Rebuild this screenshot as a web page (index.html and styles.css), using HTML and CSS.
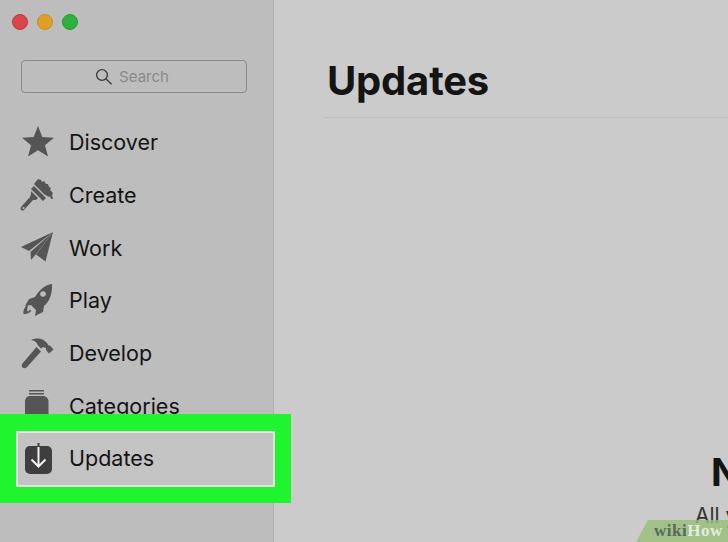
FILE: index.html
```html
<!DOCTYPE html>
<html lang="en">
<head>
  <meta charset="UTF-8" />
  <title>Updates</title>
  <link rel="stylesheet" href="styles.css">
</head>
<body>

  <div class="window">
    <aside class="sidebar">
      <div class="traffic">
        <span class="dot red"></span>
        <span class="dot yellow"></span>
        <span class="dot green"></span>
      </div>

      <div class="search">
        <svg class="search-icon" viewBox="0 0 18 18"><circle cx="7" cy="7" r="5.4"/><path d="M11 11l5.600 5.200"/></svg>
        <span>Search</span>
      </div>

      <nav class="nav">
        <div class="nav-item">
          <svg viewBox="0 0 34 34"><path d="M18 1l4.300 11 11.700.8-9 7.400 3 11.300-10-6.300-10 6.300 3-11.300-9-7.400 11.700-.8z"/></svg>
          <span>Discover</span>
        </div>
        <div class="nav-item">
          <svg viewBox="0 0 34 34"><path d="M18 1l3 1 1 2 2-1 2 3 2 0 1 3 2 1-1 2 3 3-1 2 1 4-2 0-1-3-1 1-2-1-1-1-1 0-11-11z"/><path d="M14 8l12 12-3 3-12-12z"/><path d="M11 13l7 7-2 2-3 0-9 10q-2 1-3 0t0-3l9-10 1-3z"/><circle cx="3.500" cy="30" r="1.100" fill="#bdbdbd"/></svg>
          <span>Create</span>
        </div>
        <div class="nav-item">
          <svg viewBox="0 0 34 34"><path d="M33 1L1 16l8 4z"/><path d="M33 1L10.500 21l.5 8 3.500-4z"/><path d="M33 1L16 23.500l9.500 7z"/></svg>
          <span>Work</span>
        </div>
        <div class="nav-item">
          <svg viewBox="0 0 34 34"><path d="M32 1c.5 9-2 17-8 22l-1 6-8 4 1-6-5-5-6 1 4-7 6-2C20 6 25 2 32 1z"/><circle cx="23" cy="11" r="2.800" fill="#bdbdbd"/><path d="M8 22c-3 1-5 5-4.500 9 3 .5 6.500-1 8-3.500l-2.500-.5-.5 1.500-1.500-.5.5-3z"/></svg>
          <span>Play</span>
        </div>
        <div class="nav-item">
          <svg viewBox="0 0 34 34"><path d="M11 4c7-3 13-1 16 3l1.500 2.500 1.500 0 3.500 4-4.500 4-3-3.500 0-2-3-1-2 1.500-3-3c-1-3-3-5-7-5.500z"/><path d="M16.500 11l4.500 4.500L7 31c-1.500 1.500-3 1.500-4.500.5-1-1-1-2.500 0-4z"/></svg>
          <span>Develop</span>
        </div>
        <div class="nav-item">
          <svg viewBox="0 0 34 34"><path d="M9 1h15v1.500H9zM9 4h15v1.500H9z"/><path d="M9 7h15q4 1 4.500 5v22H5V12q.5-4 4-5z"/></svg>
          <span>Categories</span>
        </div>
        <div class="nav-item current">
          <svg viewBox="0 0 34 34"><rect x="5" y="5" width="27" height="28" rx="5" fill="#3e3e3e"/><path class="arrow-top" d="M18.500 2v4"/><path class="arrow" d="M18.500 6v19M11.500 18.500l7 7 7-7"/></svg>
          <span>Updates</span>
        </div>
      </nav>
    </aside>

    <main class="main">
      <h1>Updates</h1>
      <div class="rule"></div>
      <div class="empty">
        <div class="empty-title">No Updates</div>
        <div class="empty-text">All your apps are up to date</div>
      </div>
    </main>
  </div>

  <div class="highlight"></div>

  <div class="badge"><b>wiki</b><b class="how">How</b></div>

</body>
</html>
```

FILE: styles.css
```css
html, body {
  margin: 0;
  padding: 0;
}

body {
  width: 728px;
  height: 542px;
  position: relative;
  overflow: hidden;
  font-family: Inter, "Liberation Sans", sans-serif;
  color: #141414;
}

.window {
  display: flex;
  height: 542px;
}

.sidebar {
  width: 252px;
  flex-shrink: 0;
  background: #bdbdbd;
  border-right: 1px solid #b1b1b1;
  padding: 14px 0 0 21px;
}

.traffic {
  display: flex;
  gap: 9px;
  margin-left: -9px;
}

.dot {
  width: 16px;
  height: 16px;
  border-radius: 50%;
  box-sizing: border-box;
}

.red { background: #db4549; border: 1px solid #bf3438; }
.yellow { background: #dd9f25; border: 1px solid #c88f20; }
.green { background: #2bb13c; border: 1px solid #259b33; }

.search {
  display: flex;
  align-items: center;
  justify-content: center;
  gap: 6px;
  width: 226px;
  height: 33px;
  margin-top: 30px;
  box-sizing: border-box;
  border: 1px solid #8b8b8b;
  border-radius: 4px;
  color: #8a8a8a;
  font-size: 15px;
  padding-right: 4px;
}

.search-icon {
  width: 18px;
  height: 18px;
  fill: none;
  stroke: #3c3c3c;
  stroke-width: 1.4;
}

.nav {
  margin-top: 23px;
}

.nav-item {
  display: flex;
  align-items: center;
  gap: 15px;
  height: 52.67px;
  margin-left: -1px;
  font-size: 21.5px;
}

.nav-item svg {
  width: 34px;
  height: 34px;
  flex-shrink: 0;
  fill: #555;
}

.nav-item.current {
  margin-left: -5px;
  padding-left: 4px;
  background: #c3c3c3;
}

.arrow, .arrow-top {
  fill: none;
  stroke: #f2f2f2;
  stroke-width: 2;
}

.arrow-top {
  stroke: #3e3e3e;
}

.main {
  flex: 1;
  min-width: 0;
  background: #cbcbcb;
  overflow: hidden;
}

h1 {
  margin: 0;
  padding: 58px 0 0 53px;
  font-size: 40px;
  line-height: 46px;
  font-weight: 700;
  letter-spacing: -0.2px;
}

.rule {
  height: 1px;
  margin: 13px 0 0 50px;
  background: #bebebe;
}

.empty {
  margin: 331px 0 0 437px;
  white-space: nowrap;
}

.empty-title {
  font-size: 38px;
  line-height: 46px;
  font-weight: 700;
}

.empty-text {
  margin: 7px 0 0 -16px;
  font-size: 21px;
  line-height: 28px;
  color: #333;
}

/* green marker on top of the sidebar */
.highlight {
  position: absolute;
  left: 0;
  top: 414px;
  width: 291px;
  height: 89px;
  box-sizing: border-box;
  border: solid #1ff42f;
  border-width: 17px 16px 16px 16px;
}

.highlight::before {
  content: "";
  position: absolute;
  inset: 0;
  border: 2px solid #dfe9df;
}

.badge {
  position: absolute;
  right: 0;
  bottom: 0;
  width: 92px;
  height: 22px;
  padding-left: 18px;
  box-sizing: border-box;
  background: rgba(150, 190, 120, 0.8);
  clip-path: polygon(12px 0, 100% 0, 100% 100%, 0 100%);
  font-family: "Liberation Serif", serif;
  font-size: 17px;
  line-height: 22px;
  letter-spacing: 0.5px;
  color: #56695a;
  white-space: nowrap;
  overflow: hidden;
}

.how {
  color: #e4ecdc;
}
```
